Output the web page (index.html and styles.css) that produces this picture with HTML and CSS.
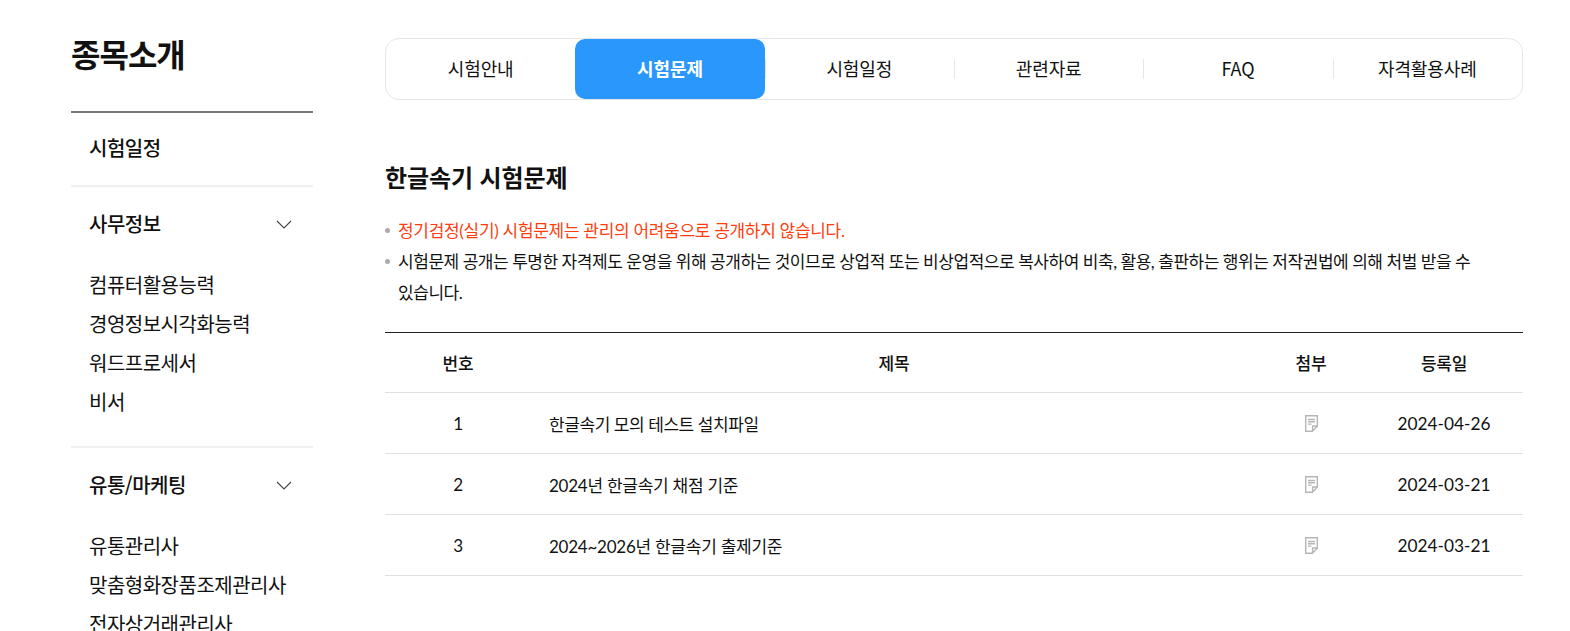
FILE: index.html
```html
<!DOCTYPE html>
<html lang="ko">
<head>
    <meta charset="UTF-8">
    <title>한글속기 시험문제</title>
    <link rel="stylesheet" href="styles.css">
</head>
<body>
    <div class="page">
        <!-- Left menu -->
        <aside class="side">
            <h2 class="side-title">종목소개</h2>
            <div class="side-group">
                <div class="side-head side-head-single">시험일정</div>
            </div>
            <div class="side-group">
                <div class="side-head">
                    사무정보
                    <svg class="chev" width="16" height="9" viewBox="0 0 16 9"><path d="M1 1l7 7 7-7" fill="none" stroke="#444" stroke-width="1.1"/></svg>
                </div>
                <ul class="side-list">
                    <li>컴퓨터활용능력</li>
                    <li>경영정보시각화능력</li>
                    <li>워드프로세서</li>
                    <li>비서</li>
                </ul>
            </div>
            <div class="side-group">
                <div class="side-head">
                    유통/마케팅
                    <svg class="chev" width="16" height="9" viewBox="0 0 16 9"><path d="M1 1l7 7 7-7" fill="none" stroke="#444" stroke-width="1.1"/></svg>
                </div>
                <ul class="side-list">
                    <li>유통관리사</li>
                    <li>맞춤형화장품조제관리사</li>
                    <li>전자상거래관리사</li>
                </ul>
            </div>
        </aside>

        <main class="main">
            <!-- Tabs -->
            <nav class="tabs">
                <a class="tab">시험안내</a>
                <a class="tab tab-active">시험문제</a>
                <a class="tab tab-line">시험일정</a>
                <a class="tab tab-line">관련자료</a>
                <a class="tab tab-line">FAQ</a>
                <a class="tab tab-line">자격활용사례</a>
            </nav>

            <h3 class="main-title">한글속기 시험문제</h3>
            <ul class="notice">
                <li class="notice-red">정기검정(실기) 시험문제는 관리의 어려움으로 공개하지 않습니다.</li>
                <li>시험문제 공개는 투명한 자격제도 운영을 위해 공개하는 것이므로 상업적 또는 비상업적으로 복사하여 비축, 활용, 출판하는 행위는 저작권법에 의해 처벌 받을 수 있습니다.</li>
            </ul>

            <table class="board">
                <thead>
                    <tr>
                        <th class="col-num">번호</th>
                        <th>제목</th>
                        <th class="col-file">첨부</th>
                        <th class="col-date">등록일</th>
                    </tr>
                </thead>
                <tbody>
                    <tr>
                        <td>1</td>
                        <td class="subject subject-tight">한글속기 모의 테스트 설치파일</td>
                        <td><svg class="file" width="13" height="17" viewBox="0 0 13 17"><path d="M.7.7h11.6v10.5l-5 5.1H.7zM12.3 11H7.6v5.3M3 4.5h7M3 6.8h7M3 9.1h3.5" fill="none" stroke="#b6b6b6" stroke-width="1.4"/></svg></td>
                        <td class="date">2024-04-26</td>
                    </tr>
                    <tr>
                        <td>2</td>
                        <td class="subject">2024년 한글속기 채점 기준</td>
                        <td><svg class="file" width="13" height="17" viewBox="0 0 13 17"><path d="M.7.7h11.6v10.5l-5 5.1H.7zM12.3 11H7.6v5.3M3 4.5h7M3 6.8h7M3 9.1h3.5" fill="none" stroke="#b6b6b6" stroke-width="1.4"/></svg></td>
                        <td class="date">2024-03-21</td>
                    </tr>
                    <tr>
                        <td>3</td>
                        <td class="subject">2024~2026년 한글속기 출제기준</td>
                        <td><svg class="file" width="13" height="17" viewBox="0 0 13 17"><path d="M.7.7h11.6v10.5l-5 5.1H.7zM12.3 11H7.6v5.3M3 4.5h7M3 6.8h7M3 9.1h3.5" fill="none" stroke="#b6b6b6" stroke-width="1.4"/></svg></td>
                        <td class="date">2024-03-21</td>
                    </tr>
                </tbody>
            </table>
        </main>
    </div>
</body>
</html>
```

FILE: styles.css
```css
* {
    box-sizing: border-box;
    margin: 0;
    padding: 0;
}

html, body {
    height: 100%;
    overflow: hidden;
}

body {
    font-family: "Noto Sans CJK KR", "Noto Sans", sans-serif;
    background: #fff;
    color: #111;
}

ul {
    list-style: none;
}

.page {
    display: flex;
    gap: 72px;
    padding: 0 47px 0 71px;
}

/* Left menu */
.side {
    width: 242px;
    flex-shrink: 0;
    padding-top: 29px;
}

.side-title {
    font-size: 32px;
    line-height: 48px;
    font-weight: 700;
    letter-spacing: -1px;
    padding-bottom: 34px;
    border-bottom: 2px solid #777;
}

.side-group {
    padding: 0 18px;
    border-bottom: 2px solid #f0f0f0;
}

.side-head {
    display: flex;
    justify-content: space-between;
    align-items: center;
    height: 73px;
    font-size: 20px;
    letter-spacing: -0.5px;
    font-weight: 500;
    padding-right: 3px;
}

.side-head-single {
    height: 72px;
    padding-bottom: 3px;
}

.chev {
    margin-top: 2px;
}

.side-list {
    padding: 0 0 25px;
    margin-top: 5px;
}

.side-list li {
    font-size: 20px;
    letter-spacing: -0.5px;
    line-height: 39px;
}

/* Tabs */
.main {
    flex: 1;
    min-width: 0;
    padding-top: 38px;
}

.tabs {
    display: flex;
    height: 62px;
    border: 1px solid #e6e6e6;
    border-radius: 14px;
}

.tab {
    flex: 1;
    display: flex;
    align-items: center;
    justify-content: center;
    font-size: 18px;
    letter-spacing: -0.1px;
    padding-bottom: 2px;
    position: relative;
}

.tab-active {
    background: #2997fb;
    color: #fff;
    font-weight: 700;
    border-radius: 10px;
}

.tab-line::before {
    content: "";
    position: absolute;
    left: 0;
    top: 20px;
    height: 20px;
    border-left: 1px solid #e6e6e6;
}

/* Notice */
.main-title {
    font-size: 24px;
    line-height: 36px;
    font-weight: 700;
    letter-spacing: -0.1px;
    margin-top: 59px;
}

.notice {
    margin-top: 20px;
    font-family: Lato, "Noto Sans CJK KR", sans-serif;
    font-size: 17px;
    letter-spacing: -0.45px;
    line-height: 31px;
}

.notice li {
    position: relative;
    padding-left: 13px;
    padding-right: 40px;
    word-break: keep-all;
}

.notice li::before {
    content: "";
    position: absolute;
    left: 0;
    top: 13px;
    width: 5px;
    height: 5px;
    border-radius: 50%;
    background: #aaa;
}

.notice .notice-red {
    color: #ff3d0d;
    letter-spacing: -0.3px;
}

/* Board */
.board {
    width: 100%;
    margin-top: 24px;
    border-collapse: collapse;
    border-top: 1px solid #222;
    table-layout: fixed;
    font-family: Lato, "Noto Sans CJK KR", sans-serif;
}

.board th, .board td {
    height: 61px;
    text-align: center;
    font-size: 17px;
    letter-spacing: -0.25px;
    border-bottom: 1px solid #e0e0e0;
}

.board th {
    height: 60px;
    font-weight: 500;
}

.col-num {
    width: 146px;
}

.col-file {
    width: 108px;
}

.col-date {
    width: 158px;
}

.board td.subject {
    text-align: left;
    padding-left: 18px;
}

.board td.subject-tight {
    letter-spacing: -0.42px;
}

.board td.date {
    font-size: 17.3px;
    letter-spacing: 0;
}

.file {
    display: block;
    margin: 0 auto;
}
```
